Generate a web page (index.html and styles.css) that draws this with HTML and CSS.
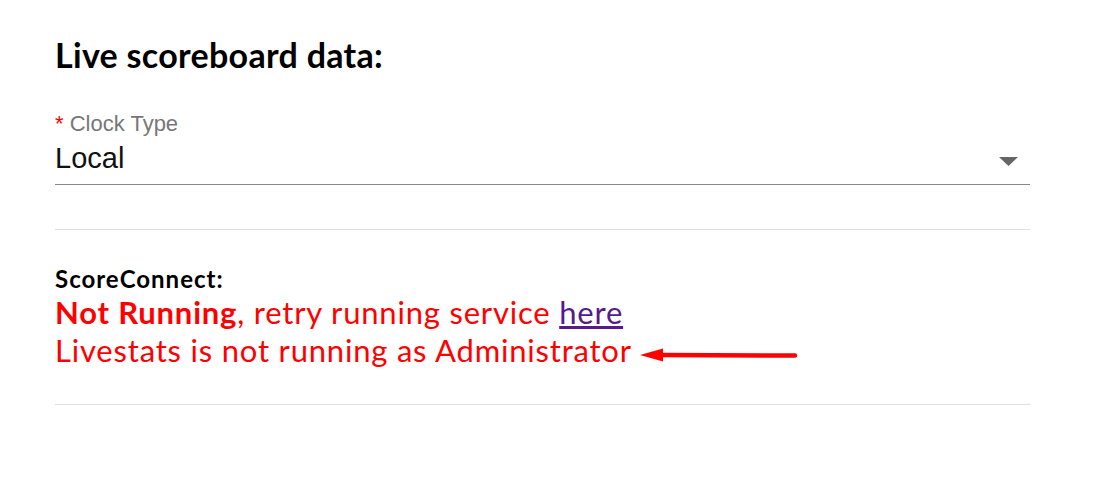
FILE: index.html
```html
<!DOCTYPE html>
<html>
<head>
<meta charset="utf-8">
<link rel="stylesheet" href="styles.css">
</head>
<body>
<div class="panel">
  <h2 class="title">Live scoreboard data:</h2>
  <div class="field">
    <div class="label"><span class="req">*</span> Clock Type</div>
    <div class="select">
      <span class="value">Local</span>
      <svg class="caret" width="19" height="9" viewBox="0 0 19 9"><path d="M0 0H19L9.5 9Z" fill="#666"/></svg>
    </div>
  </div>
  <hr class="divider">
  <div class="status">
    <div class="status-title">ScoreConnect:</div>
    <div class="status-line"><strong>Not Running</strong>, retry running service <a href="#">here</a></div>
    <div class="status-line admin">Livestats is not running as Administrator
      <svg class="arrow" width="160" height="16" viewBox="0 0 160 16"><path d="M22 8L155 8.5" stroke="#f00" stroke-width="4.5" stroke-linecap="round"/><path d="M0 8L23 1.5V14.5Z" fill="#f00"/></svg>
    </div>
  </div>
  <hr class="divider end">
</div>
</body>
</html>
```
FILE: styles.css
```css
html, body { margin: 0; padding: 0; background: #fff; }
.panel { padding: 34px 65px 0 55px; font-family: Lato, "Liberation Sans", sans-serif; }
.title { margin: 0; font-size: 34px; letter-spacing: 0.3px; font-weight: 700; color: #000; line-height: 41px; }
.field { margin-top: 36px; }
.label { font-family: "Liberation Sans", Arial, sans-serif; font-size: 22px; color: #777; line-height: 26px; }
.req { color: #f00; }
.select { display: flex; align-items: center; justify-content: space-between; border-bottom: 1px solid #888; padding: 4px 12px 9px 0; }
.value { font-family: "Liberation Sans", Arial, sans-serif; font-size: 29px; color: #111; line-height: 34px; }
.caret { margin-top: 6px; }
.divider { border: 0; border-top: 1px solid #e0e0e0; margin: 44px 0 0 0; }
.status { padding-top: 34px; }
.status-title { font-size: 24px; letter-spacing: 1px; font-weight: 700; color: #000; line-height: 29px; }
.status-line { font-size: 31px; letter-spacing: 0.8px; color: #f00; line-height: 38px; }
.status-line a { color: #551a8b; text-decoration: underline; }
.admin { display: flex; align-items: center; }
.arrow { margin-left: 8px; margin-top: 10px; }
.end { margin-top: 35px; }
```
